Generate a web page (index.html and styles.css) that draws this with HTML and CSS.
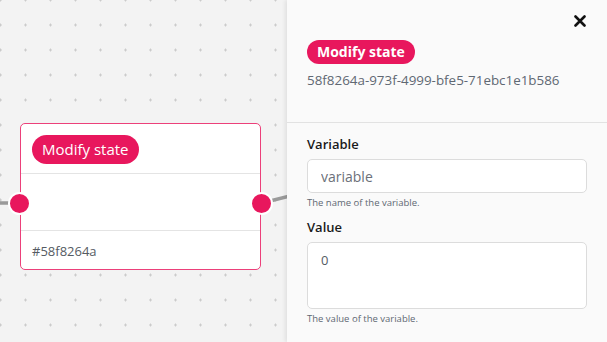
FILE: index.html
```html
<!DOCTYPE html>
<html lang="en">
  <head>
    <meta charset="UTF-8" />
    <meta name="viewport" content="width=device-width, initial-scale=1.0" />
    <title>Flow editor</title>
    <link rel="stylesheet" href="styles.css">
  </head>

  <body>
    <div class="editor">
      <div class="canvas">
        <svg class="edges" width="290" height="342">
          <path d="M0 203 L10 203" />
          <path d="M270 201 L290 196" />
        </svg>

        <div class="node">
          <div class="node-head">
            <span class="node-badge">Modify state</span>
          </div>
          <div class="node-body">
            <span class="handle handle-in"></span>
            <span class="handle handle-out"></span>
          </div>
          <div class="node-foot">#58f8264a</div>
        </div>
      </div>

      <aside class="panel">
        <div class="panel-head">
          <button class="close" aria-label="Close">
            <svg width="12" height="12" viewBox="0 0 12 12">
              <path d="M1.5 1.5 L10.5 10.5 M10.5 1.5 L1.5 10.5" />
            </svg>
          </button>
          <span class="panel-badge">Modify state</span>
          <div class="uuid">58f8264a-973f-4999-bfe5-71ebc1e1b586</div>
        </div>

        <div class="panel-body">
          <div class="field">
            <label for="variable">Variable</label>
            <input id="variable" type="text" placeholder="variable" />
            <div class="hint">The name of the variable.</div>
          </div>
          <div class="field">
            <label for="value">Value</label>
            <textarea id="value">0</textarea>
            <div class="hint">The value of the variable.</div>
          </div>
        </div>
      </aside>
    </div>
  </body>
</html>
```

FILE: styles.css
```css
body {
  margin: 0;
  font-family: "Open Sans", "Noto Sans", sans-serif;
  color: #1a1a1a;
  background-color: #f3f3f3;
}

.editor {
  display: flex;
  height: 342px;
  overflow: hidden;
}

.canvas {
  position: relative;
  flex: 1;
  background-color: #f3f3f3;
  background-image: radial-gradient(circle, #cbcbcb 1px, transparent 1.3px);
  background-size: 25px 25px;
  background-position: -12px -12.5px;
}

.edges {
  position: absolute;
  left: 0;
  top: 0;
}

.edges path {
  stroke: #9a9a9a;
  stroke-width: 3.5;
  fill: none;
}

.node {
  position: absolute;
  left: 20px;
  top: 123px;
  width: 239px;
  background-color: #ffffff;
  border: 1.5px solid #ec407a;
  border-radius: 5px;
}

.node-head {
  height: 50px;
  padding: 11px 11px 0;
  box-sizing: border-box;
  border-bottom: 1px solid #e4e4e4;
}

.node-badge {
  display: inline-block;
  background-color: #e8175d;
  color: #ffffff;
  font-size: 15px;
  line-height: 29px;
  padding: 0 10px;
  border-radius: 15px;
}

.node-body {
  position: relative;
  height: 56px;
  border-bottom: 1px solid #e4e4e4;
}

.handle {
  position: absolute;
  top: 18px;
  width: 19px;
  height: 19px;
  border-radius: 50%;
  background-color: #e8175d;
  border: 2px solid #ffffff;
}

.handle-in {
  left: -13px;
}

.handle-out {
  right: -13px;
}

.node-foot {
  padding: 11px 11px 0;
  height: 38px;
  box-sizing: border-box;
  font-size: 13px;
  color: #555b63;
}

.panel {
  width: 320px;
  background-color: #fafafa;
  box-shadow: -2px 0 4px rgba(0, 0, 0, 0.08);
  position: relative;
  z-index: 1;
}

.panel-head {
  position: relative;
  height: 123px;
  box-sizing: border-box;
  padding: 40px 20px 0;
  border-bottom: 1px solid #e2e2e2;
}

.close {
  position: absolute;
  top: 15px;
  right: 21px;
  padding: 0;
  border: none;
  background: none;
  cursor: pointer;
}

.close svg path {
  stroke: #111111;
  stroke-width: 2.6;
  stroke-linecap: round;
}

.panel-badge {
  display: inline-block;
  background-color: #e8175d;
  color: #ffffff;
  font-size: 14px;
  font-weight: bold;
  line-height: 24px;
  padding: 0 10px;
  border-radius: 12px;
}

.uuid {
  margin-top: 7px;
  font-size: 13.4px;
  color: #5f6873;
}

.panel-body {
  padding: 12px 20px 0;
}

.field {
  margin-bottom: 9px;
}

label {
  display: block;
  font-size: 13px;
  font-weight: 600;
  margin-bottom: 6px;
}

input,
textarea {
  display: block;
  width: 100%;
  box-sizing: border-box;
  border: 1px solid #dcdcdc;
  border-radius: 5px;
  background-color: #ffffff;
  font-family: inherit;
  font-size: 14px;
  color: #555b63;
  padding: 0 13px;
}

input {
  height: 34px;
}

input::placeholder {
  color: #6b7079;
}

textarea {
  height: 67px;
  padding-top: 8px;
  font-size: 13px;
  resize: none;
}

.hint {
  margin-top: 3px;
  font-size: 9.5px;
  color: #5f6873;
}
```
